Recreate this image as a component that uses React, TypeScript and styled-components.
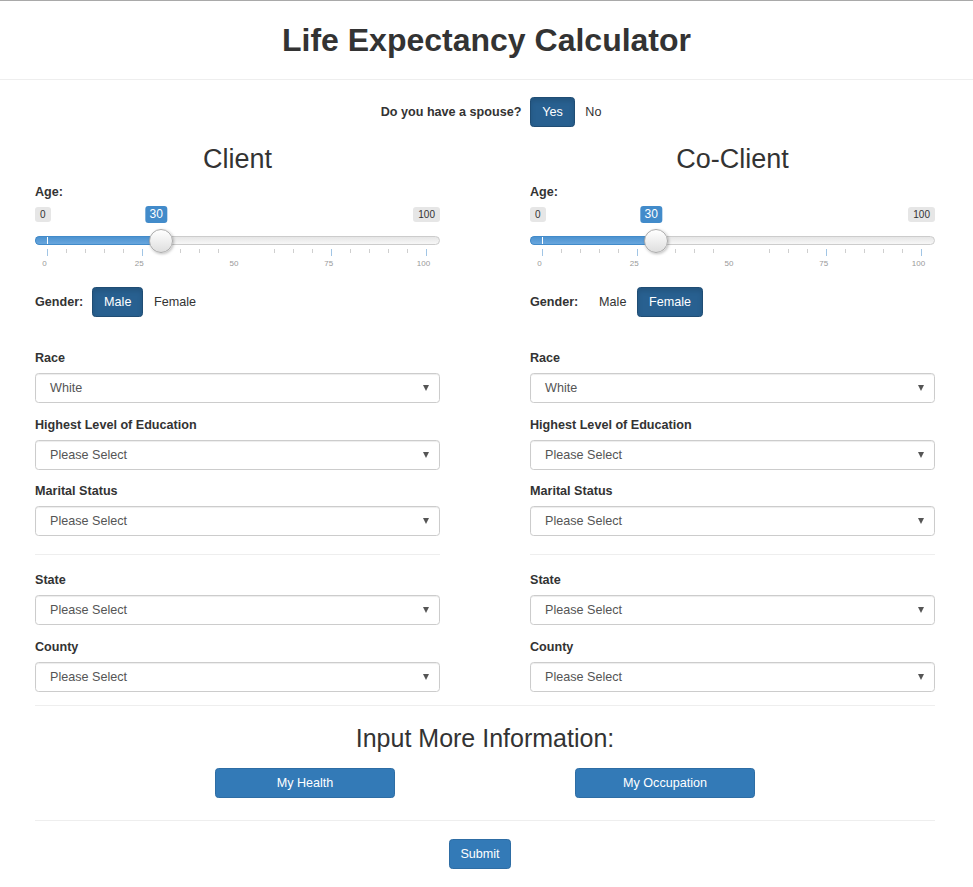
import React from "react";
import styled, { createGlobalStyle } from "styled-components";

const GlobalStyle = createGlobalStyle`
  html, body {
    margin: 0;
    padding: 0;
    background: #fff;
  }
  body {
    font-family: "Liberation Sans", Arial, Helvetica, sans-serif;
    font-size: 12.6px;
    line-height: 18px;
    color: #333;
  }
  * {
    box-sizing: border-box;
  }
`;

const SLIDER_MIN_X = 12;
const SLIDER_SPAN = 379;
const TICKS = Array.from({ length: 21 }, (_, i) => i * 5).filter(
  (v) => v !== 30 && v !== 50 && v !== 55
);
const GRID_LABELS = [0, 25, 50, 75, 100];

type Person = {
  title: string;
  gender: "Male" | "Female";
  race: string;
};

const people: Person[] = [
  { title: "Client", gender: "Male", race: "White" },
  { title: "Co-Client", gender: "Female", race: "White" },
];

function tickX(value: number) {
  return SLIDER_MIN_X + (SLIDER_SPAN * value) / 100;
}

function AgeSlider({ value }: { value: number }) {
  const x = tickX(value);
  return (
    <SliderWrap>
      <Badge $kind="min" style={{ left: 0 }}>0</Badge>
      <Badge $kind="max" style={{ right: 0 }}>100</Badge>
      <Badge $kind="value" style={{ left: x - 4.5 }}>{value}</Badge>
      <Track />
      <Bar style={{ width: x }}>
        <BarMark />
      </Bar>
      <Handle style={{ left: x }} />
      <Grid width="405" height="8" viewBox="0 0 405 8">
        {TICKS.map((v) => {
          const major = v % 25 === 0;
          return (
            <rect
              key={v}
              x={Math.round(tickX(v))}
              y={0}
              width={1}
              height={major ? 7 : 4}
              fill={major ? "#a1c5e5" : "#cfcfcf"}
            />
          );
        })}
      </Grid>
      {GRID_LABELS.map((v) => (
        <GridLabel key={v} style={{ left: tickX(v) - 2.5 }}>
          {v}
        </GridLabel>
      ))}
    </SliderWrap>
  );
}

function Select({ value }: { value: string }) {
  return (
    <SelectBox>
      <span>{value}</span>
      <Caret />
    </SelectBox>
  );
}

function Field({ label, value }: { label: string; value: string }) {
  return (
    <FormGroup>
      <FieldLabel>{label}</FieldLabel>
      <Select value={value} />
    </FormGroup>
  );
}

function PersonColumn({ person }: { person: Person }) {
  return (
    <Column>
      <ColumnTitle>{person.title}</ColumnTitle>
      <AgeLabel>Age:</AgeLabel>
      <AgeSlider value={30} />
      <GenderRow>
        <InlineLabel>Gender:</InlineLabel>
        <ToggleGroup>
          <ToggleButton $active={person.gender === "Male"}>Male</ToggleButton>
          <ToggleButton $active={person.gender === "Female"}>Female</ToggleButton>
        </ToggleGroup>
      </GenderRow>
      <Fields $top={32}>
        <Field label="Race" value={person.race} />
        <Field label="Highest Level of Education" value="Please Select" />
        <Field label="Marital Status" value="Please Select" />
      </Fields>
      <Rule />
      <Fields>
        <Field label="State" value="Please Select" />
        <Field label="County" value="Please Select" />
      </Fields>
    </Column>
  );
}

export default function App() {
  return (
    <>
      <GlobalStyle />
      <Header>
        <Title>Life Expectancy Calculator</Title>
      </Header>
      <Main>
        <SpouseRow>
          <InlineLabel>Do you have a spouse?</InlineLabel>
          <ToggleGroup>
            <ToggleButton $active>Yes</ToggleButton>
            <ToggleButton $active={false}>No</ToggleButton>
          </ToggleGroup>
        </SpouseRow>
        <Columns>
          {people.map((p) => (
            <PersonColumn key={p.title} person={p} />
          ))}
        </Columns>
        <WideRule />
        <MoreTitle>Input More Information:</MoreTitle>
        <MoreButtons>
          <PrimaryButton $width={180}>My Health</PrimaryButton>
          <PrimaryButton $width={180}>My Occupation</PrimaryButton>
        </MoreButtons>
        <BottomRule />
        <SubmitRow>
          <PrimaryButton>Submit</PrimaryButton>
        </SubmitRow>
      </Main>
    </>
  );
}

const Header = styled.header`
  height: 80px;
  border-top: 1px solid #a9a9a9;
  border-bottom: 1px solid #eee;
  display: flex;
  align-items: center;
  justify-content: center;
`;

const Title = styled.h1`
  margin: 0;
  font-size: 32px;
  line-height: 36px;
  font-weight: bold;
  color: #333;
`;

const Main = styled.main`
  width: 900px;
  margin-left: 35px;
  padding-bottom: 20px;
`;

const SpouseRow = styled.div`
  margin-top: 17px;
  padding-left: 24px;
  display: flex;
  align-items: center;
  justify-content: center;
`;

const InlineLabel = styled.span`
  font-weight: bold;
  margin-right: 9px;
`;

const ToggleGroup = styled.div`
  display: flex;
`;

const ToggleButton = styled.button<{ $active: boolean }>`
  height: 30px;
  padding: 0 10.8px;
  margin-left: -1px;
  font-family: inherit;
  font-size: 12.6px;
  line-height: 28px;
  border-radius: 3.6px;
  border: 1px solid ${(p) => (p.$active ? "#204d74" : "transparent")};
  background: ${(p) => (p.$active ? "#286090" : "transparent")};
  color: ${(p) => (p.$active ? "#fff" : "#333")};
  box-shadow: ${(p) => (p.$active ? "inset 0 3px 5px rgba(0,0,0,0.125)" : "none")};
  &:first-child {
    margin-left: 0;
  }
`;

const Columns = styled.div`
  margin-top: 17px;
  display: grid;
  grid-template-columns: 405px 405px;
  column-gap: 90px;
`;

const Column = styled.section`
  display: flex;
  flex-direction: column;
`;

const ColumnTitle = styled.h3`
  margin: 0;
  height: 30px;
  font-size: 27px;
  line-height: 30px;
  font-weight: normal;
  text-align: center;
  color: #333;
`;

const FieldLabel = styled.label`
  display: block;
  font-weight: bold;
  line-height: 18px;
`;

const AgeLabel = styled(FieldLabel)`
  margin-top: 9px;
`;

const SliderWrap = styled.div`
  position: relative;
  margin-top: 2px;
  height: 70px;
`;

const Badge = styled.span<{ $kind: "min" | "max" | "value" }>`
  position: absolute;
  top: ${(p) => (p.$kind === "value" ? "3px" : "4px")};
  padding: ${(p) => (p.$kind === "value" ? "1px 4px" : "1px 5px")};
  font-size: ${(p) => (p.$kind === "value" ? "12px" : "10px")};
  line-height: ${(p) => (p.$kind === "value" ? "15px" : "13px")};
  border-radius: 3px;
  background: ${(p) => (p.$kind === "value" ? "#428bca" : "#e6e6e6")};
  color: ${(p) => (p.$kind === "value" ? "#fff" : "#333")};
  transform: ${(p) => (p.$kind === "value" ? "translateX(-50%)" : "none")};
`;

const Track = styled.div`
  position: absolute;
  top: 33px;
  left: 0;
  right: 0;
  height: 9px;
  border: 1px solid #ccc;
  border-radius: 8px;
  background: linear-gradient(to bottom, #dedede -50%, #fff 150%);
`;

const Bar = styled.div`
  position: absolute;
  top: 33px;
  left: 0;
  height: 9px;
  border-top: 1px solid #428bca;
  border-bottom: 1px solid #428bca;
  border-left: 1px solid #428bca;
  border-radius: 8px 0 0 8px;
  background: linear-gradient(to bottom, #4d93d0 0%, #68a6dd 100%);
`;

const BarMark = styled.div`
  position: absolute;
  left: 11px;
  top: 0;
  bottom: 0;
  width: 1px;
  background: #fff;
`;

const Handle = styled.div`
  position: absolute;
  top: 26px;
  width: 24px;
  height: 24px;
  border-radius: 50%;
  border: 1px solid #ababab;
  background: linear-gradient(to bottom, #fff 0%, #dedede 100%);
  box-shadow: 1px 1px 3px rgba(0, 0, 0, 0.25);
  transform: translateX(-50%);
`;

const Grid = styled.svg`
  position: absolute;
  top: 46px;
  left: 0;
  display: block;
`;

const GridLabel = styled.span`
  position: absolute;
  top: 56px;
  font-size: 8px;
  line-height: 10px;
  color: #999;
  transform: translateX(-50%);
`;

const GenderRow = styled.div`
  margin-top: 14px;
  display: flex;
  align-items: center;
`;

const Fields = styled.div<{ $top?: number }>`
  margin-top: ${(p) => p.$top ?? 0}px;
  display: flex;
  flex-direction: column;
  gap: 12.5px;
`;

const FormGroup = styled.div`
  display: flex;
  flex-direction: column;
  gap: 6px;
`;

const SelectBox = styled.div`
  height: 30px;
  display: flex;
  align-items: center;
  justify-content: space-between;
  padding: 0 10px 0 14px;
  border: 1px solid #ccc;
  border-radius: 3.6px;
  box-shadow: inset 0 1px 1px rgba(0, 0, 0, 0.075);
  color: #555;
  background: #fff;
`;

const Caret = styled.span`
  width: 0;
  height: 0;
  border-left: 3.5px solid transparent;
  border-right: 3.5px solid transparent;
  border-top: 6px solid #555;
`;

const Rule = styled.hr`
  margin: 18px 0 16px;
  border: 0;
  border-top: 1px solid #eee;
`;

const WideRule = styled(Rule)`
  margin: 13px 0 0;
`;

const BottomRule = styled(Rule)`
  margin: 22px 0 0;
`;

const MoreTitle = styled.h3`
  margin: 18px 0 0;
  font-size: 25px;
  line-height: 28px;
  font-weight: normal;
  text-align: center;
  color: #333;
`;

const MoreButtons = styled.div`
  margin-top: 16px;
  display: flex;
  justify-content: center;
  gap: 180px;
`;

const PrimaryButton = styled.button<{ $width?: number }>`
  height: 30px;
  width: ${(p) => (p.$width ? `${p.$width}px` : "auto")};
  padding: 0 10.8px;
  font-family: inherit;
  font-size: 12.6px;
  line-height: 28px;
  color: #fff;
  background: #337ab7;
  border: 1px solid #2e6da4;
  border-radius: 3.6px;
`;

const SubmitRow = styled.div`
  margin-top: 18px;
  display: flex;
  justify-content: center;
  padding-right: 10px;
`;
